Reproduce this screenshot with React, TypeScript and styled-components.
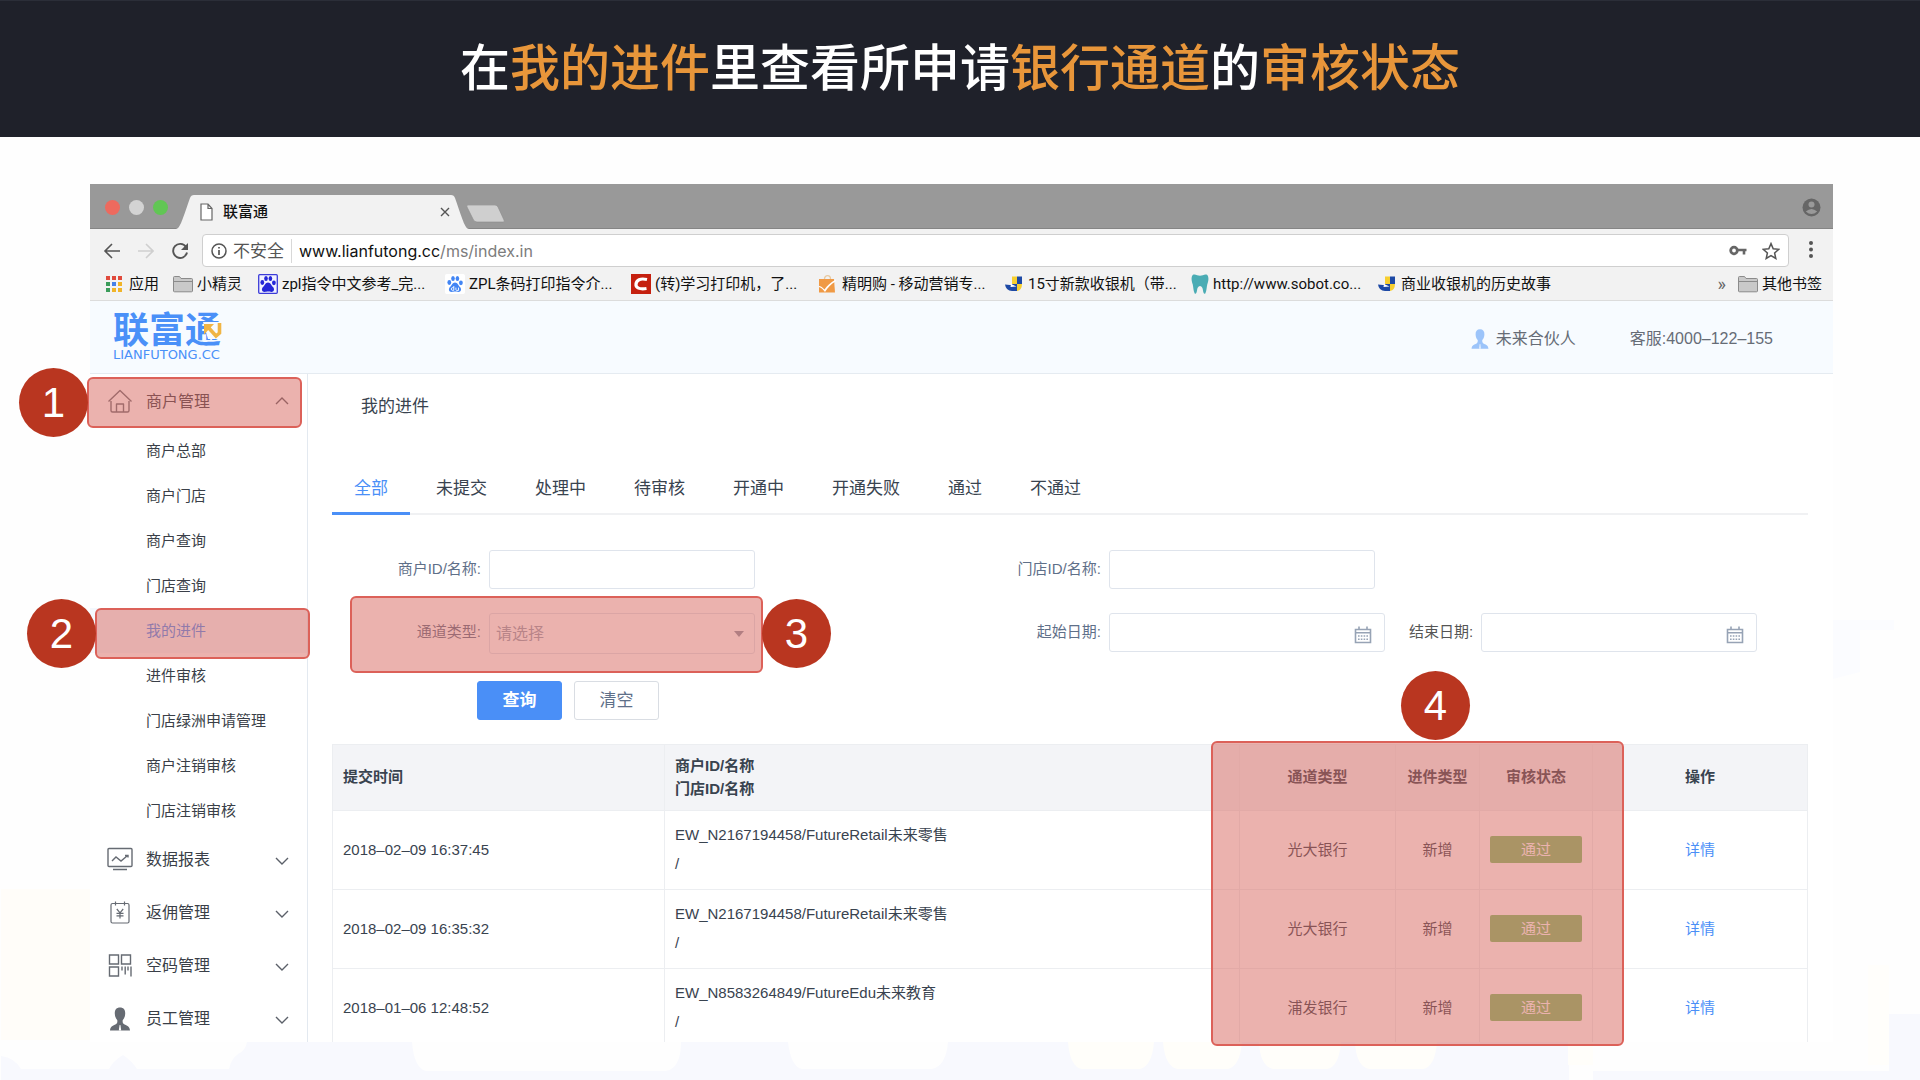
import React from "react";
import styled, { createGlobalStyle, css } from "styled-components";

const cjk = `"Noto Sans CJK SC", sans-serif`;
const chromeFont = `Inter, ${cjk}`;
const pageFont = `"Liberation Sans", ${cjk}`;

const GlobalStyle = createGlobalStyle`
  *, *::before, *::after { box-sizing: border-box; }
  body { margin: 0; background: #fefefe; font-family: ${pageFont}; }
  button, input, select { font: inherit; color: inherit; margin: 0; }
  button { border: 0; padding: 0; background: none; cursor: pointer; }
  a { color: inherit; text-decoration: none; }
  ul { list-style: none; margin: 0; padding: 0; }
`;

/* ---------- slide ---------- */

const Slide = styled.div`
  position: relative;
  isolation: isolate;
  display: flex;
  flex-direction: column;
  height: 100vh;
  overflow: hidden;
`;

const Backdrop = styled.svg`
  position: absolute;
  inset: 0;
  z-index: -1;
  width: 100%;
  height: 100%;
`;

const Banner = styled.header`
  flex: none;
  display: flex;
  align-items: center;
  justify-content: center;
  height: 137px;
  padding-bottom: 10px;
  border-top: 1px solid #2b2e38;
  background: #1f212a;
`;

const BannerTitle = styled.h1`
  margin: 0;
  font: 500 50px/72px ${cjk};
  color: #fff;
`;

const Accent = styled.span`
  color: #e8963a;
`;

const Browser = styled.section`
  flex: 1;
  min-height: 0;
  display: flex;
  flex-direction: column;
  margin: 47px 87px 38px 90px;
  background: #fff;
`;

/* ---------- callouts ---------- */

const Highlight = styled.div`
  position: absolute;
  z-index: 2;
  border: 2px solid #dc6159;
  border-radius: 6px;
  background: rgba(215, 101, 93, 0.5);
  pointer-events: none;
`;

const Badge = styled.span`
  position: absolute;
  z-index: 3;
  display: flex;
  align-items: center;
  justify-content: center;
  width: 69px;
  height: 69px;
  border-radius: 50%;
  background: #b93620;
  color: #fff;
  font: 400 42px/69px "Liberation Sans", sans-serif;
`;

const MenuHighlight = styled(Highlight)`
  top: 2px;
  left: -3px;
  width: 215px;
  height: 51px;
`;
const MenuBadge = styled(Badge)`
  top: -7px;
  left: -71px;
`;
const LinkHighlight = styled(Highlight)`
  top: 0;
  left: 5px;
  width: 215px;
  height: 51px;
`;
const LinkBadge = styled(Badge)`
  top: -9px;
  left: -63px;
`;
const FieldHighlight = styled(Highlight)`
  top: -17px;
  left: 18px;
  width: 413px;
  height: 77px;
`;
const FieldBadge = styled(Badge)`
  top: -14px;
  left: 430px;
`;
const ColumnsHighlight = styled(Highlight)`
  top: -3px;
  right: 184px;
  bottom: -4px;
  width: 413px;
`;
const ColumnsBadge = styled(Badge)`
  top: -73px;
  right: 338px;
`;

/* ---------- browser chrome ---------- */

const TabStrip = styled.div`
  flex: none;
  display: flex;
  align-items: flex-end;
  height: 45px;
  padding-right: 12px;
  border-bottom: 1px solid #858585;
  background: #999;
  font-family: ${chromeFont};
`;

const Lights = styled.div`
  display: flex;
  gap: 9px;
  align-self: center;
  padding: 2px 8px 0 15px;
`;

const Light = styled.button<{ $color: string }>`
  width: 15px;
  height: 15px;
  border-radius: 50%;
  background: ${(p) => p.$color};
`;

const BrowserTab = styled.div`
  position: relative;
  display: flex;
  align-items: center;
  width: 293px;
  height: 34px;
  margin-bottom: -1px;
  padding: 0 16px 0 24px;
`;

const TabShape = styled.svg`
  position: absolute;
  inset: 0;
  width: 100%;
  height: 100%;
`;

const TabTitle = styled.span`
  position: relative;
  flex: 1;
  padding-left: 10px;
  font-size: 15px;
  line-height: 20px;
  font-weight: 500;
  color: #111;
`;

const Above = styled.span`
  position: relative;
  display: flex;
`;

const CloseTab = styled.button`
  position: relative;
  display: flex;
`;

const NewTab = styled.button`
  display: flex;
  align-self: center;
  padding-top: 15px;
  margin: 0 auto 0 -3px;
`;

const Profile = styled.button`
  display: flex;
  align-self: center;
  padding-top: 2px;
`;

const Toolbar = styled.div`
  flex: none;
  display: flex;
  align-items: center;
  padding: 5px 16px 0 13px;
  background: #f2f2f2;
  font-family: ${chromeFont};
`;

const NavButton = styled.button`
  display: flex;
  width: 20px;
  margin-right: 13px;
`;

const Omnibox = styled.div`
  flex: 1;
  display: flex;
  align-items: center;
  height: 33px;
  margin-right: 16px;
  padding: 0 8px;
  border: 1px solid #cfcfcf;
  border-radius: 4px;
  background: #fff;
  font-size: 17px;
  line-height: 24px;
`;

const Insecure = styled.span`
  padding: 0 7px 0 6px;
  border-right: 1px solid #d8d8d8;
  color: #555;
`;

const Url = styled.div`
  flex: 1;
  padding-left: 7px;
  font-size: 16px;
  color: #7c7c7c;
`;

const Host = styled.span`
  color: #111;
`;

const OmniButton = styled.button`
  display: flex;
  margin-left: 15px;
`;

const Bookmarks = styled.nav`
  flex: none;
  display: flex;
  align-items: center;
  height: 34px;
  padding: 1px 11px 0 15px;
  border-bottom: 1px solid #dcdcdc;
  background: #f2f2f2;
  font: 400 15px/24px Roboto, ${cjk};
  color: #111;
`;

const Bookmark = styled.a<{ $width?: number }>`
  display: flex;
  align-items: center;
  gap: 4px;
  flex: none;
  width: ${(p) => (p.$width ? `${p.$width}px` : "auto")};
  white-space: nowrap;
  svg { flex: none; }
`;

const More = styled.button`
  margin: 0 12px 0 auto;
  font-size: 18px;
  line-height: 24px;
  color: #666;
`;

/* ---------- app shell ---------- */

const AppHeader = styled.header`
  flex: none;
  display: flex;
  align-items: center;
  height: 73px;
  padding: 3px 60px 0 23px;
  border-bottom: 1px solid #e5ebf1;
  background: #f7fbff;
  font-size: 16px;
  line-height: 24px;
  color: #666c76;
`;

const Logo = styled.a`
  position: relative;
  display: flex;
  flex-direction: column;
  gap: 5px;
  margin-right: auto;
  padding-bottom: 6px;
  color: #4a90f8;
`;

const LogoName = styled.span`
  font: 700 36px/34px ${cjk};
`;

const LogoDomain = styled.span`
  font: 400 13px/12px "DejaVu Sans", sans-serif;
`;

const LogoArrow = styled.svg`
  position: absolute;
  top: 12px;
  right: -3px;
`;

const UserButton = styled.button`
  display: flex;
  align-items: center;
  gap: 5px;
  margin-right: 54px;
`;

const Body = styled.div`
  flex: 1;
  min-height: 0;
  display: flex;
`;

const Sidebar = styled.nav`
  position: relative;
  z-index: 1;
  flex: none;
  width: 218px;
  padding-top: 1px;
  border-right: 1px solid #e3e9f0;
  color: #3a3f48;
`;

const Group = styled.div`
  position: relative;
`;

const GroupButton = styled.button`
  display: flex;
  align-items: center;
  width: 100%;
  height: 53px;
  padding: 0 18px 0 17px;
  font-size: 16px;
  line-height: 24px;
  text-align: left;
`;

const GroupLabel = styled.span`
  flex: 1;
  padding-left: 13px;
`;

const SubItem = styled.li`
  position: relative;
`;

const SubLink = styled.a<{ $active?: boolean }>`
  display: block;
  height: 45px;
  padding-left: 56px;
  font-size: 15px;
  line-height: 45px;
  ${(p) =>
    p.$active &&
    css`
      background: #f4f8fd;
      color: #4a8ff7;
    `}
`;

const Main = styled.main`
  flex: 1;
  min-width: 0;
  display: flex;
  flex-direction: column;
  padding: 19px 25px 0 24px;
  color: #39434f;
`;

const PageTitle = styled.h2`
  margin: 0 0 55px 29px;
  font-size: 17px;
  line-height: 28px;
  font-weight: 400;
`;

const Tabs = styled.div`
  flex: none;
  display: flex;
  gap: 4px;
  border-bottom: 2px solid #f0f1f3;
`;

const Tab = styled.button<{ $active?: boolean }>`
  margin-bottom: -2px;
  padding: 0 22px 10px;
  border-bottom: 3px solid ${(p) => (p.$active ? "#4a8ff7" : "transparent")};
  font-size: 17px;
  line-height: 26px;
  color: ${(p) => (p.$active ? "#4a8ff7" : "inherit")};
`;

/* ---------- filter form ---------- */

const Filters = styled.form`
  flex: none;
  display: grid;
  grid-template-columns: 42% 1fr;
  row-gap: 24px;
  padding: 35px 0 24px;
  font-size: 15px;
  line-height: 22px;
  color: #5f7089;
`;

const Field = styled.div`
  position: relative;
  display: flex;
  align-items: flex-start;
  gap: 8px;
`;

const Label = styled.label<{ $inline?: boolean }>`
  width: ${(p) => (p.$inline ? "auto" : "149px")};
  margin-left: ${(p) => (p.$inline ? "16px" : "0")};
  color: ${(p) => (p.$inline ? "#555" : "inherit")};
  line-height: 38px;
  text-align: right;
`;

const control = css`
  height: 39px;
  border: 1px solid #dfe4ec;
  border-radius: 3px;
  background: #fff;
  outline: 0;
`;

const TextInput = styled.input`
  ${control}
  width: 266px;
  padding: 0 6px;
`;

const SelectBox = styled.div`
  position: relative;
  display: flex;
  align-items: center;
`;

const Select = styled.select`
  ${control}
  appearance: none;
  width: 266px;
  height: 41px;
  padding: 0 24px 0 6px;
  font-size: 16px;
  color: #98a3b3;
`;

const Caret = styled.svg`
  position: absolute;
  right: 11px;
  pointer-events: none;
`;

const DateBox = styled.div`
  ${control}
  display: flex;
  align-items: center;
  width: 276px;
  padding: 4px 12px 0 6px;
`;

const DateInput = styled.input`
  flex: 1;
  min-width: 0;
  border: 0;
  background: none;
  outline: 0;
`;

const DateButton = styled.button`
  display: flex;
`;

const Actions = styled.div`
  grid-column: 1 / -1;
  display: flex;
  gap: 12px;
  padding: 3px 0 0 145px;
`;

const ActionButton = styled.button<{ $primary?: boolean }>`
  width: 85px;
  height: 39px;
  border: 1px solid ${(p) => (p.$primary ? "#4a8ff7" : "#d9dde3")};
  border-radius: 3px;
  background: ${(p) => (p.$primary ? "#4a8ff7" : "#fff")};
  color: ${(p) => (p.$primary ? "#fff" : "inherit")};
  font-size: 17px;
  font-weight: ${(p) => (p.$primary ? 700 : 400)};
`;

/* ---------- results ---------- */

const Results = styled.section`
  position: relative;
  flex: 1;
  min-height: 0;
  display: flex;
`;

const TableClip = styled.div`
  flex: 1;
  overflow: hidden;
`;

const Table = styled.table`
  width: 100%;
  table-layout: fixed;
  border-collapse: separate;
  border-spacing: 0;
  border-left: 1px solid #eceef1;
  font-size: 15px;
`;

const Col = styled.col<{ $width?: number }>`
  width: ${(p) => (p.$width ? `${p.$width}px` : "auto")};
`;

const cell = css<{ $center?: boolean }>`
  padding: 0 10px 2px;
  border-right: 1px solid #eceef1;
  border-bottom: 1px solid #eceef1;
  text-align: ${(p) => (p.$center ? "center" : "left")};
`;

const Th = styled.th<{ $center?: boolean }>`
  ${cell}
  height: 67px;
  border-top: 1px solid #eceef1;
  background: #f3f4f7;
  line-height: 23px;
  font-weight: 700;
`;

const Td = styled.td<{ $center?: boolean }>`
  ${cell}
  height: 79px;
  line-height: 29px;
`;

const Status = styled.span`
  display: block;
  height: 27px;
  border-radius: 2px;
  background: #7dc36d;
  line-height: 27px;
  color: #fff;
`;

const DetailLink = styled.a`
  color: #4a8ff7;
`;

/* ---------- icons ---------- */

const HouseIcon = () => (
  <svg width="26" height="26" viewBox="0 0 26 26" fill="none" stroke="#6b7078" strokeWidth="1.4" aria-hidden="true">
    <path d="M1.500 12.500 13 1.500l11.500 11M4 12v9.500q0 1.500 1.500 1.500h15q1.500 0 1.500-1.500V12M9.500 23v-8h7v8" strokeLinejoin="round" />
  </svg>
);
const ChartIcon = () => (
  <svg width="26" height="26" viewBox="0 0 26 26" fill="none" stroke="#666b73" strokeWidth="1.4" aria-hidden="true">
    <rect x="1" y="1.500" width="24" height="18" rx="1" />
    <path d="M5 14l4-4 5 4 6-5M18 8.500h3v2M6 22.500h14" />
  </svg>
);
const RebateIcon = () => (
  <svg width="26" height="26" viewBox="0 0 26 26" fill="none" stroke="#666b73" strokeWidth="1.2" aria-hidden="true">
    <rect x="4" y="3.500" width="18" height="19.500" rx="1.500" />
    <path d="M8.500 1.500v4M17.500 1.500v4M9.800 9 13 12.800 16.200 9M13 12.800v5.700M9.500 13.300h7M9.500 15.800h7" />
  </svg>
);
const CodeIcon = () => (
  <svg width="26" height="26" viewBox="0 0 26 26" fill="none" stroke="#666b73" strokeWidth="1.4" aria-hidden="true">
    <path d="M2.500 2h9v9h-9zM14.500 2h9v9h-9zM2.500 14h9v9h-9zM15 13.500v4M18.200 13.500v8M21 13.500v4M24 13.500v10" />
  </svg>
);
const PersonShape = ({ size, color, tie }: { size: number; color: string; tie: string }) => (
  <svg width={size} height={size} viewBox="0 0 26 26" aria-hidden="true">
    <path
      fill={color}
      d="M13 1.500c-3.600 0-5.400 2.400-5.200 6.200.1 2.800 1 5 2.500 6.500.3 2.300-.3 3.600-2 4.400C5.400 20 3.400 20.600 3 24.500h20c-.4-3.900-2.400-4.500-5.300-5.900-1.700-.8-2.300-2.100-2-4.400 1.500-1.500 2.400-3.700 2.500-6.500.2-3.800-1.600-6.200-5.200-6.200z"
    />
    <path fill={tie} d="M12.600 19h.8l.8 5.500h-2.400z" />
  </svg>
);
const Chevron = ({ up }: { up?: boolean }) => (
  <svg width="14" height="10" viewBox="0 0 14 10" fill="none" stroke="#5b6069" strokeWidth="1.4" aria-hidden="true">
    <path d={up ? "M1 7l6-6 6 6" : "M1 3l6 6 6-6"} />
  </svg>
);
const FolderIcon = () => (
  <svg width="20" height="18" viewBox="0 0 20 18" fill="#c9c9c9" stroke="#8b8b8b" aria-hidden="true">
    <path d="M.5 16V2.500q0-1 1-1h5l1.500 2h10.500q1 0 1 1V16q0 .8-1 .8h-17q-1 0-1-.8zM.5 6.500h19" />
  </svg>
);
const AppsIcon = () => (
  <svg width="20" height="18" viewBox="0 0 20 18" aria-hidden="true">
    {["#e04a3c", "#e04a3c", "#e04a3c", "#3b9c5a", "#4580e8", "#f0b429", "#3b9c5a", "#f0b429", "#f0b429"].map((c, i) => (
      <rect key={i} x={(i % 3) * 6 + 1} y={Math.floor(i / 3) * 6 + 1} width="4" height="4" fill={c} />
    ))}
  </svg>
);
const PawIcon = ({ framed }: { framed?: boolean }) => (
  <svg width="20" height="20" viewBox="0 0 20 20" fill={framed ? "#2426d8" : "#4285f4"} aria-hidden="true">
    <rect x=".7" y=".7" width="18.600" height="18.600" rx="1" fill={framed ? "#f2f2ff" : "#fff"} stroke={framed ? "#3b3bd8" : "#fff"} strokeWidth="1.300" />
    <ellipse cx="4.300" cy="8.500" rx="1.900" ry="2.400" />
    <ellipse cx="8" cy="4.600" rx="1.800" ry="2.500" />
    <ellipse cx="12.400" cy="4.600" rx="1.800" ry="2.500" />
    <ellipse cx="15.900" cy="8.800" rx="1.900" ry="2.400" />
    <path d="M10 8.500c2.600 0 3.400 3 5 4.500 2 2 .9 5-1.500 5-1.500 0-2-.4-3.500-.4S8 18 6.500 18C4 18 3 15 5 13c1.700-1.500 2.400-4.500 5-4.500z" />
    {!framed && <path d="M8.800 12v4.300H7.300q-1-.1-1-1.300t1-1.300h1.500M10.900 13.600v2q0 .8.900.8h1.700v-2.800" fill="none" stroke="#fff" strokeWidth=".9" />}
  </svg>
);
const CsdnIcon = () => (
  <svg width="20" height="20" viewBox="0 0 20 20" aria-hidden="true">
    <rect width="20" height="20" fill="#c5200f" />
    <path d="M16 5.500C9 4 5.500 6 5 10s3.500 5.500 10.500 4.500" fill="none" stroke="#fff" strokeWidth="3.200" />
  </svg>
);
const BagIcon = () => (
  <svg width="20" height="20" viewBox="0 0 20 20" aria-hidden="true">
    <path d="M6.500 5c0-4.500 6-4.500 6 0" fill="none" stroke="#e8c9a0" strokeWidth="1.300" />
    <path d="M1 5h15l1 13.500H1z" fill="#f09a45" />
    <path d="M1 12c3 .6 4 2 5.500 3.600C9 11.500 12.500 8.500 18 5.500l-.5 2C13 10 10 13.500 7 18 5 15.500 3.500 13.500 1 13z" fill="#fff" />
  </svg>
);
const JIcon = () => (
  <svg width="20" height="18" viewBox="0 0 20 18" aria-hidden="true">
    <path d="M8 1.500h5V9H8z" fill="#f7cf2f" />
    <path d="M13 1.500h5V9h-5z" fill="#1d49a5" />
    <path d="M13 9h5q0 6-5 7z" fill="#f7cf2f" />
    <path d="M1 9.500l5 .5h2v-1h5v7H8q-6 0-7-6.500z" fill="#1d49a5" />
    <path d="M7 9l5.500 2.500-6 .5z" fill="#fff" />
  </svg>
);
const ToothIcon = () => (
  <svg width="18" height="20" viewBox="1 0 18 20" fill="#4aacb4" aria-hidden="true">
    <path d="M3 .8c2-1.300 4.500.9 7 .9s5-2.200 7-.9c2.200 2 1.500 6.500.3 9.500-.8 3.200-.5 6.500-2 9.200-1.300 1-2-1-2.300-3-.3-2.300-1-4.500-3-4.500s-2.700 2.200-3 4.500c-.3 2-1 4-2.300 3-1.500-2.700-1.200-6-2-9.200C1.500 7.300.8 2.800 3 .8z" />
  </svg>
);
const CalendarIcon = () => (
  <svg width="18" height="18" viewBox="0 0 18 18" fill="none" stroke="#97a3b5" aria-hidden="true">
    <path d="M1.500 3.500h15v13h-15zM1 6.800h16M5 .5v3.500M13 .5v3.500" strokeWidth="1.600" />
    <path d="M4 10h10M4 13.300h10" strokeWidth="1.600" strokeDasharray="1.600 1.200" />
  </svg>
);

/* ---------- data ---------- */

const bookmarks = [
  { text: "应用", icon: <AppsIcon />, width: 68 },
  { text: "小精灵", icon: <FolderIcon />, width: 85 },
  { text: "zpl指令中文参考_完...", icon: <PawIcon framed />, width: 187 },
  { text: "ZPL条码打印指令介...", icon: <PawIcon />, width: 186 },
  { text: "(转)学习打印机，了...", icon: <CsdnIcon />, width: 187 },
  { text: "精明购 - 移动营销专...", icon: <BagIcon />, width: 186 },
  { text: "15寸新款收银机（带...", icon: <JIcon />, width: 187 },
  { text: "http://www.sobot.co...", icon: <ToothIcon />, width: 186 },
  { text: "商业收银机的历史故事", icon: <JIcon /> },
];

const merchantLinks = [
  "商户总部",
  "商户门店",
  "商户查询",
  "门店查询",
  "我的进件",
  "进件审核",
  "门店绿洲申请管理",
  "商户注销审核",
  "门店注销审核",
];

const groups = [
  { text: "数据报表", icon: <ChartIcon /> },
  { text: "返佣管理", icon: <RebateIcon /> },
  { text: "空码管理", icon: <CodeIcon /> },
  { text: "员工管理", icon: <PersonShape size={26} color="#666b73" tie="#fff" /> },
];

const tabs = ["全部", "未提交", "处理中", "待审核", "开通中", "开通失败", "通过", "不通过"];

const rows = [
  { time: "2018–02–09 16:37:45", store: "EW_N2167194458/FutureRetail未来零售", bank: "光大银行" },
  { time: "2018–02–09 16:35:32", store: "EW_N2167194458/FutureRetail未来零售", bank: "光大银行" },
  { time: "2018–01–06 12:48:52", store: "EW_N8583264849/FutureEdu未来教育", bank: "浦发银行" },
];

/* ---------- sections ---------- */

const BackdropArt = () => (
  <Backdrop viewBox="0 0 1920 1080" preserveAspectRatio="none" aria-hidden="true">
    <rect x="1" y="889" width="90" height="151" fill="#fffdf9" />
    <path d="M1833 620h61v10h-34v42l-27 7z" fill="#fbfcff" />
    <rect x="1889" y="1014" width="31" height="66" fill="#f8f9fe" />
    <rect x="1868" y="965" width="21" height="100" fill="#fffefb" />
    <path d="M1 1056q14 2 20 13h88q4-8 14-14 9 6 14 14h92q2-10 9-15 8-4 9-12h165q2 26 14 29h240q15-3 15-29h107q3 25 14 27h130q14-3 16-27h621v38h320v-4 13H1z" fill="#f8f9fe" />
    <path d="M1068 1042h86q-2 24-14 27h-58q-12-2-14-27zM1163 1042h79q-2 24-14 27h-50q-13-2-15-27zM1259 1042h82q-2 25-14 27h-54q-13-3-14-27zM1355 1042h82q-2 25-14 27h-54q-13-3-14-27zM1568 1042h25v23h-25z" fill="#fffefa" />
    <path d="M1593 1071h327v9h-327z" fill="#f8f9fe" />
    <rect x="1593" y="1042" width="275" height="29" fill="#fefefe" />
  </Backdrop>
);

const ChromeBar = () => (
  <>
    <TabStrip>
      <Lights>
        <Light $color="#ed6a5e" aria-label="关闭窗口" />
        <Light $color="#d3d3d3" aria-label="最小化" />
        <Light $color="#61c654" aria-label="全屏" />
      </Lights>
      <BrowserTab>
        <TabShape viewBox="0 0 293 34" preserveAspectRatio="none" aria-hidden="true">
          <path d="M0 34C4 33 5 29 14 3q1-3 4-3h257q3 0 4 3c9 26 10 30 14 31z" fill="#f2f2f2" />
        </TabShape>
        <Above>
          <svg width="13" height="18" viewBox="0 0 13 18" fill="#fff" stroke="#666" strokeWidth="1.200" aria-hidden="true">
            <path d="M1 1h7l4 4.500V17H1zM8 1v4.500h4" />
          </svg>
        </Above>
        <TabTitle>联富通</TabTitle>
        <CloseTab aria-label="关闭标签页">
          <svg width="16" height="10" viewBox="0 0 16 10" fill="none" stroke="#555" strokeWidth="1.400">
            <path d="M4 1l8 8M12 1l-8 8" />
          </svg>
        </CloseTab>
      </BrowserTab>
      <NewTab aria-label="新建标签页">
        <svg width="40" height="18" viewBox="0 0 40 18">
          <path d="M2 0h27q2 0 3 2l6 13q1 2-1 2H11q-3 0-4-3L1 2q-1-2 1-2z" fill="#cfcfcf" stroke="#8c8c8c" strokeWidth=".6" />
        </svg>
      </NewTab>
      <Profile aria-label="用户">
        <svg width="19" height="19" viewBox="0 0 19 19">
          <circle cx="9.500" cy="9.500" r="9" fill="#666" />
          <circle cx="9.500" cy="6.500" r="3" fill="#999" />
          <path d="M3.800 13.500q5.700-5 11.400 0-5.700 5-11.400 0z" fill="#999" />
        </svg>
      </Profile>
    </TabStrip>
    <Toolbar>
      <NavButton aria-label="后退">
        <svg width="18" height="16" viewBox="0 0 18 16" fill="none" stroke="#555" strokeWidth="1.600"><path d="M17 8H2M9 1L2 8l7 7" /></svg>
      </NavButton>
      <NavButton aria-label="前进">
        <svg width="18" height="16" viewBox="0 0 18 16" fill="none" stroke="#cfcfcf" strokeWidth="1.600"><path d="M2 8h15M10 1l7 7-7 7" /></svg>
      </NavButton>
      <NavButton aria-label="刷新">
        <svg width="20" height="18" viewBox="0 0 20 18" fill="none" stroke="#555" strokeWidth="1.900"><path d="M17 5a7 7 0 1 0 1 5.500" /><path d="M19 1v7h-7z" fill="#555" stroke="none" /></svg>
      </NavButton>
      <Omnibox>
        <svg width="16" height="16" viewBox="0 0 16 16" fill="none" stroke="#555" strokeWidth="1.500" aria-hidden="true">
          <circle cx="8" cy="8" r="7" />
          <path d="M8 7v5M8 4v1.600" strokeWidth="1.700" />
        </svg>
        <Insecure>不安全</Insecure>
        <Url role="textbox" aria-label="地址" tabIndex={0}>
          <Host>www.lianfutong.cc</Host>/ms/index.in
        </Url>
        <OmniButton aria-label="密码">
          <svg width="18" height="12" viewBox="0 0 18 12" fill="none" stroke="#666">
            <circle cx="5" cy="5.500" r="3.300" strokeWidth="2.800" />
            <path d="M8 5h9.500M15 5v4.500" strokeWidth="2.600" />
          </svg>
        </OmniButton>
        <OmniButton aria-label="收藏">
          <svg width="18" height="18" viewBox="0 0 18 18" fill="none" stroke="#555" strokeWidth="1.500">
            <path d="M9 1.600l2.200 5.200 5.600.5-4.200 3.700 1.200 5.500L9 13.600l-4.800 2.900L5.400 11 1.200 7.300l5.600-.5z" />
          </svg>
        </OmniButton>
      </Omnibox>
      <button type="button" aria-label="菜单">
        <svg width="12" height="20" viewBox="0 0 12 20" fill="#555">
          <circle cx="6" cy="4" r="2" />
          <circle cx="6" cy="10.500" r="2" />
          <circle cx="6" cy="17" r="2" />
        </svg>
      </button>
    </Toolbar>
    <Bookmarks aria-label="书签">
      {bookmarks.map((b) => (
        <Bookmark key={b.text} href="#" $width={b.width}>
          {b.icon}
          {b.text}
        </Bookmark>
      ))}
      <More aria-label="更多书签">»</More>
      <Bookmark href="#">
        <FolderIcon />
        其他书签
      </Bookmark>
    </Bookmarks>
  </>
);

const SideMenu = () => (
  <Sidebar>
    <Group>
      <GroupButton aria-expanded="true">
        <HouseIcon />
        <GroupLabel>商户管理</GroupLabel>
        <Chevron up />
      </GroupButton>
      <MenuHighlight />
      <MenuBadge>1</MenuBadge>
      <ul>
        {merchantLinks.map((text) => {
          const active = text === "我的进件";
          return (
            <SubItem key={text}>
              <SubLink href="#" $active={active}>{text}</SubLink>
              {active && (
                <>
                  <LinkHighlight />
                  <LinkBadge>2</LinkBadge>
                </>
              )}
            </SubItem>
          );
        })}
      </ul>
    </Group>
    {groups.map((g) => (
      <GroupButton key={g.text} aria-expanded="false">
        {g.icon}
        <GroupLabel>{g.text}</GroupLabel>
        <Chevron />
      </GroupButton>
    ))}
  </Sidebar>
);

const FilterForm = () => (
  <Filters onSubmit={(e) => e.preventDefault()}>
    <Field>
      <Label htmlFor="merchant">商户ID/名称:</Label>
      <TextInput id="merchant" />
    </Field>
    <Field>
      <Label htmlFor="store">门店ID/名称:</Label>
      <TextInput id="store" />
    </Field>
    <Field>
      <Label htmlFor="channel">通道类型:</Label>
      <SelectBox>
        <Select id="channel" defaultValue="">
          <option value="">请选择</option>
          <option value="ceb">光大银行</option>
          <option value="spdb">浦发银行</option>
        </Select>
        <Caret width="10" height="6" viewBox="0 0 10 6" fill="#8d97a6" aria-hidden="true">
          <path d="M0 0h10L5 6z" />
        </Caret>
      </SelectBox>
      <FieldHighlight />
      <FieldBadge>3</FieldBadge>
    </Field>
    <Field>
      <Label htmlFor="from">起始日期:</Label>
      <DateBox>
        <DateInput id="from" />
        <DateButton type="button" aria-label="选择起始日期"><CalendarIcon /></DateButton>
      </DateBox>
      <Label htmlFor="to" $inline>结束日期:</Label>
      <DateBox>
        <DateInput id="to" />
        <DateButton type="button" aria-label="选择结束日期"><CalendarIcon /></DateButton>
      </DateBox>
    </Field>
    <Actions>
      <ActionButton type="submit" $primary>查询</ActionButton>
      <ActionButton type="reset">清空</ActionButton>
    </Actions>
  </Filters>
);

const ResultTable = () => (
  <Results>
    <TableClip>
      <Table>
        <colgroup>
          <Col $width={332} />
          <Col />
          <Col $width={156} />
          <Col $width={84} />
          <Col $width={113} />
          <Col $width={215} />
        </colgroup>
        <thead>
          <tr>
            <Th>提交时间</Th>
            <Th>商户ID/名称<br />门店ID/名称</Th>
            <Th $center>通道类型</Th>
            <Th $center>进件类型</Th>
            <Th $center>审核状态</Th>
            <Th $center>操作</Th>
          </tr>
        </thead>
        <tbody>
          {rows.map((r) => (
            <tr key={r.time}>
              <Td>{r.time}</Td>
              <Td>{r.store}<br />/</Td>
              <Td $center>{r.bank}</Td>
              <Td $center>新增</Td>
              <Td $center><Status>通过</Status></Td>
              <Td $center><DetailLink href="#">详情</DetailLink></Td>
            </tr>
          ))}
        </tbody>
      </Table>
    </TableClip>
    <ColumnsHighlight />
    <ColumnsBadge>4</ColumnsBadge>
  </Results>
);

export default function App() {
  return (
    <Slide>
      <GlobalStyle />
      <BackdropArt />
      <Banner>
        <BannerTitle>
          在<Accent>我的进件</Accent>里查看所申请<Accent>银行通道</Accent>的<Accent>审核状态</Accent>
        </BannerTitle>
      </Banner>
      <Browser>
        <ChromeBar />
        <AppHeader>
          <Logo href="#">
            <LogoName>联富通</LogoName>
            <LogoDomain>LIANFUTONG.CC</LogoDomain>
            <LogoArrow width="24" height="19" viewBox="0 0 24 19" fill="none" aria-hidden="true">
              <path d="M3 0h21v17H8z" fill="#f7fbff" />
              <path d="M7 4l9 10 3.500-3V1" stroke="#f0b545" strokeWidth="3.600" />
              <path d="M4 2h10L4 12.500z" fill="#f0b545" />
            </LogoArrow>
          </Logo>
          <UserButton>
            <PersonShape size={22} color="#9cc4fa" tie="#e4effd" />
            未来合伙人
          </UserButton>
          <span>客服:4000–122–155</span>
        </AppHeader>
        <Body>
          <SideMenu />
          <Main>
            <PageTitle>我的进件</PageTitle>
            <Tabs role="tablist">
              {tabs.map((t, i) => (
                <Tab key={t} role="tab" aria-selected={i === 0} $active={i === 0}>{t}</Tab>
              ))}
            </Tabs>
            <FilterForm />
            <ResultTable />
          </Main>
        </Body>
      </Browser>
    </Slide>
  );
}
